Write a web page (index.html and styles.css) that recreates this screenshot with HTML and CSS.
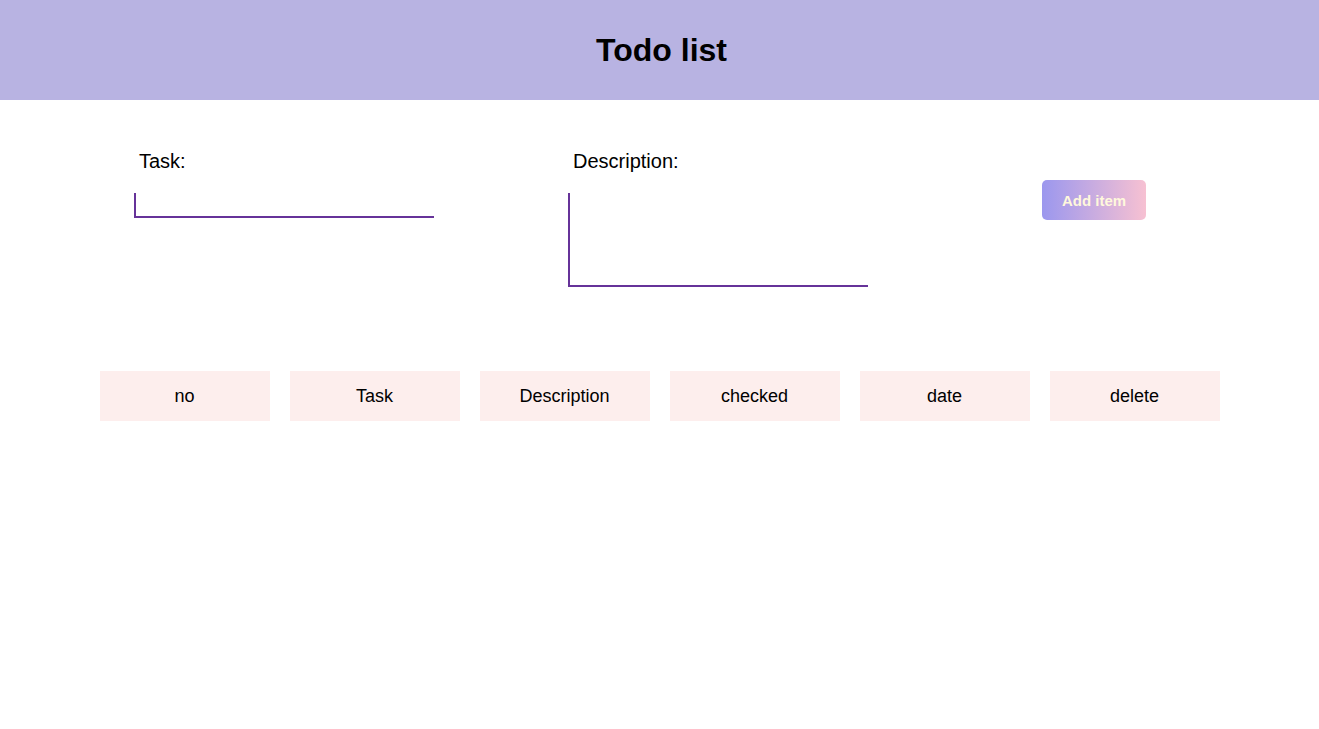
FILE: index.html
```html
<!DOCTYPE html>
<html>
<head>
<meta charset="utf-8">
<link rel="stylesheet" href="styles.css">
</head>
<body>
<header class="header"><h1 class="title">Todo list</h1></header>
<main>
  <form class="form">
    <div class="field field-task">
      <label class="label">Task:</label>
      <input class="input" type="text">
    </div>
    <div class="field field-desc">
      <label class="label">Description:</label>
      <textarea class="textarea"></textarea>
    </div>
    <button class="btn" type="button">Add item</button>
  </form>
  <div class="table-head">
    <div class="cell">no</div>
    <div class="cell">Task</div>
    <div class="cell">Description</div>
    <div class="cell">checked</div>
    <div class="cell">date</div>
    <div class="cell">delete</div>
  </div>
</main>
</body>
</html>
```
FILE: styles.css
```css
* { box-sizing: border-box; }
body {
  margin: 0;
  font-family: "Liberation Sans", Arial, sans-serif;
  background: #fff;
  color: #000;
}
.header {
  height: 100px;
  background: #b8b3e2;
  display: flex;
  align-items: center;
  justify-content: center;
}
.title {
  margin: 0 0 0 4px;
  font-size: 32px;
  font-weight: bold;
}
.form {
  display: flex;
  align-items: flex-start;
  padding: 50px 0 0 134px;
  height: 271px;
}
.field {
  display: flex;
  flex-direction: column;
  width: 300px;
}
.field-task { margin-right: 134px; }
.field-desc { margin-right: 174px; }
.label {
  font-size: 20px;
  line-height: 23px;
  padding-left: 5px;
  margin-bottom: 20px;
}
.input, .textarea {
  width: 300px;
  border: none;
  border-left: 2px solid #663399;
  border-bottom: 2px solid #663399;
  outline: none;
  background: transparent;
  margin: 0;
  padding: 0;
  font-family: inherit;
}
.input { height: 25px; }
.textarea { height: 94px; resize: none; }
.btn {
  margin-top: 30px;
  width: 104px;
  height: 40px;
  border: none;
  border-radius: 5px;
  background: linear-gradient(to right, #9b97ee, #f7c1d2);
  color: #fff8dc;
  font-family: inherit;
  font-weight: bold;
  font-size: 15px;
  padding: 0;
}
.table-head {
  display: flex;
  justify-content: center;
  gap: 20px;
}
.cell {
  width: 170px;
  height: 50px;
  background: #fdeeed;
  display: flex;
  align-items: center;
  justify-content: center;
  font-size: 18px;
}
```
